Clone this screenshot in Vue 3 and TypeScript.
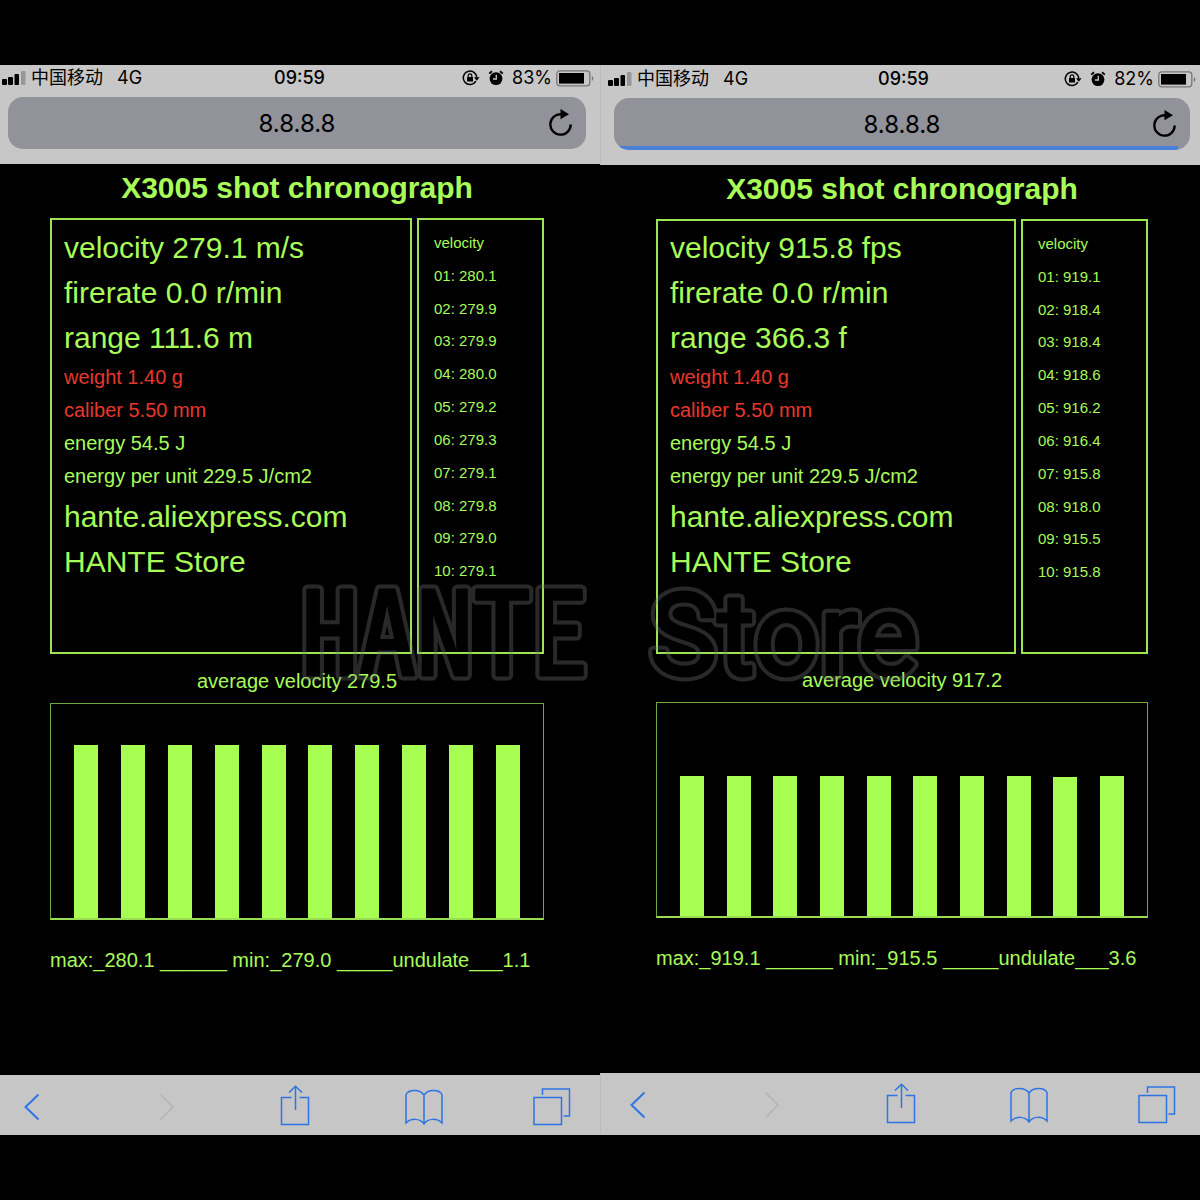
<script setup lang="ts">
interface Phone {
  id: string
  battery: number
  speed: string
  range: string
  average: string
  shots: string[]
  scale: number
  summary: string
  progress: number
}

const phones: Phone[] = [
  {
    id: 'metric',
    battery: 83,
    speed: '279.1 m/s',
    range: '111.6 m',
    average: '279.5',
    shots: ['280.1', '279.9', '279.9', '280.0', '279.2', '279.3', '279.1', '279.8', '279.0', '279.1'],
    scale: 346,
    summary: 'max:_280.1 ______ min:_279.0 _____undulate___1.1',
    progress: 0,
  },
  {
    id: 'imperial',
    battery: 82,
    speed: '915.8 fps',
    range: '366.3 f',
    average: '917.2',
    shots: ['919.1', '918.4', '918.4', '918.6', '916.2', '916.4', '915.8', '918.0', '915.5', '915.8'],
    scale: 1398,
    summary: 'max:_919.1 ______ min:_915.5 _____undulate___3.6',
    progress: 98,
  },
]

const shotNumber = (index: number): string => String(index + 1).padStart(2, '0')
</script>

<template>
  <main class="stage">
    <section v-for="phone in phones" :key="phone.id" class="phone" :class="phone.id">
      <header class="topbar">
        <div class="status">
          <div class="carrier">
            <svg class="signal" width="24" height="14" viewBox="0 0 24 14">
              <rect x="0" y="8" width="5" height="6" rx="1" />
              <rect x="6" y="6" width="5" height="8" rx="1" />
              <rect x="12.500" y="3" width="4.500" height="11" rx="1" />
              <rect x="19" y="0" width="4.500" height="14" rx="1" fill="#979797" />
            </svg>
            <span>中国移动</span>
            <span class="network">4G</span>
          </div>
          <time class="clock">09:59</time>
          <div class="indicators">
            <svg class="lock" width="18" height="16" viewBox="0 0 18 16">
              <path d="M13.800 11.200A6.700 6.700 0 1 1 14.700 7.500" fill="none" stroke="#000" stroke-width="1.500" />
              <path d="M12 7.200h5.600l-2.800 3.500z" />
              <rect x="5" y="7" width="6" height="4.600" rx=".5" />
              <path d="M6.200 7.200V5.600a1.800 1.800 0 0 1 3.600 0v1.600" fill="none" stroke="#000" stroke-width="1.200" />
            </svg>
            <svg class="alarm" width="16" height="16" viewBox="0 0 16 16">
              <circle cx="8" cy="8.600" r="6.400" />
              <path d="M1.200 3.600 4 1.200M12 1.200l2.800 2.400" stroke="#000" stroke-width="1.800" />
              <path d="M8.300 4.800v4.200H5" fill="none" stroke="#c7c7c7" stroke-width="1.300" />
            </svg>
            <span class="percent">{{ phone.battery }}%</span>
            <svg class="battery" width="38" height="17" viewBox="0 0 38 17">
              <rect x=".8" y=".8" width="33" height="15" rx="3" fill="none" stroke="#777" stroke-width="1.300" />
              <rect x="3" y="3" width="25" height="10.600" />
              <path d="M35.800 6c2 .8 2 4.200 0 5z" fill="#777" />
            </svg>
          </div>
        </div>
        <form class="address" @submit.prevent>
          <input class="url" type="text" value="8.8.8.8" aria-label="Address" />
          <button class="reload" type="button" aria-label="Reload">
            <svg width="24" height="28" viewBox="0 0 24 28">
              <path d="M21.700 15.500A10.200 10.200 0 1 1 12.500 5.300" fill="none" stroke="#000" stroke-width="2.400" />
              <path d="M11.500 0v10.200L20 5.200z" />
            </svg>
          </button>
          <div v-if="phone.progress" class="progress" :style="{ width: phone.progress + '%' }"></div>
        </form>
      </header>

      <div class="page">
        <h1>X3005 shot chronograph</h1>
        <div class="panels">
          <div class="panel readings">
            <p>velocity {{ phone.speed }}</p>
            <p>firerate 0.0 r/min</p>
            <p>range {{ phone.range }}</p>
            <div class="details">
              <p class="alert">weight 1.40 g</p>
              <p class="alert">caliber 5.50 mm</p>
              <p>energy 54.5 J</p>
              <p>energy per unit 229.5 J/cm2</p>
            </div>
            <p>hante.aliexpress.com</p>
            <p>HANTE Store</p>
          </div>
          <div class="panel log">
            <ul>
              <li>velocity</li>
              <li v-for="(shot, i) in phone.shots" :key="i">{{ shotNumber(i) }}: {{ shot }}</li>
            </ul>
          </div>
        </div>
        <p class="average">average velocity {{ phone.average }}</p>
        <div class="chart">
          <div
            v-for="(shot, i) in phone.shots"
            :key="i"
            class="bar"
            :style="{ height: (Number(shot) / phone.scale) * 100 + '%' }"
          ></div>
        </div>
        <p class="summary">{{ phone.summary }}</p>
      </div>

      <nav class="toolbar">
        <button type="button" class="back" aria-label="Back">
          <svg width="40" height="40" viewBox="0 0 40 40"><path d="M26.500 7.500 13.500 20l13 12.500" stroke-width="2" /></svg>
        </button>
        <button type="button" class="forward" aria-label="Forward" disabled>
          <svg width="40" height="40" viewBox="0 0 40 40"><path d="M13.500 7.500 26 20 13.500 32.500" stroke-width="1.500" /></svg>
        </button>
        <button type="button" aria-label="Share">
          <svg width="40" height="40" viewBox="0 0 40 40">
            <path d="M16.500 10.500H6.500v27h27v-27h-9M20.500 23V0M14 5.500 20.500-.8l6.500 6.300" />
          </svg>
        </button>
        <button type="button" aria-label="Bookmarks">
          <svg width="40" height="40" viewBox="0 0 40 40">
            <path d="M20 8C16 2 5 2 2 7.500V36c5-5 14-5 18 1 4-6 13-6 18-1V7.500C35 2 24 2 20 8zV37" />
          </svg>
        </button>
        <button type="button" aria-label="Tabs">
          <svg width="40" height="40" viewBox="0 0 40 40"><path d="M2 10.500h27.500v27H2zM10.500 8V2h27v27h-6" /></svg>
        </button>
      </nav>
    </section>

    <svg class="watermark" width="660" height="130" viewBox="0 0 660 130" aria-hidden="true">
      <defs>
        <g id="brand" class="word">
          <text class="caps" x="1" y="102">HANTE</text>
          <text x="349" y="102">Store</text>
        </g>
      </defs>
      <mask id="outline" maskUnits="userSpaceOnUse" x="0" y="0" width="660" height="130">
        <use href="#brand" fill="#fff" stroke="#fff" stroke-width="11" />
        <use href="#brand" fill="#000" stroke="#000" stroke-width="3" />
      </mask>
      <rect width="660" height="130" fill="#777" fill-opacity=".34" mask="url(#outline)" />
    </svg>
  </main>
</template>

<style>
body {
  margin: 0;
  background: #000;
}
</style>

<style scoped>
* {
  box-sizing: border-box;
}
p,
h1,
ul {
  margin: 0;
  padding: 0;
}
.stage {
  position: relative;
  display: flex;
  padding: 65px 0;
  background: #000;
  font-family: "Liberation Sans", Arial, "Noto Sans CJK SC", sans-serif;
}
.phone {
  flex: 1;
  display: flex;
  flex-direction: column;
  min-width: 0;
}
.topbar {
  height: 99px;
  padding: 0 14px 0 8px;
  background: #c7c7c7;
}
.status {
  display: grid;
  grid-template-columns: 1fr auto 1fr;
  align-items: center;
  height: 26px;
  margin: 0 -8px 6px -6px;
  font-family: Inter, "Noto Sans CJK SC", sans-serif;
  font-size: 18px;
  line-height: 24px;
  white-space: nowrap;
}
.carrier,
.indicators {
  display: flex;
  align-items: center;
}
.signal {
  margin-right: 5px;
}
.network {
  margin-left: 14px;
}
.clock {
  padding-left: 3px;
  font-weight: 500;
}
.indicators {
  justify-content: flex-end;
}
.alarm {
  margin: 0 8px;
}
.battery {
  margin-left: 4px;
}
.address {
  position: relative;
  height: 52px;
  border-radius: 15px;
  background: #91929a;
  overflow: hidden;
}
.url {
  display: block;
  width: 100%;
  height: 52px;
  padding: 0;
  border: 0;
  background: transparent;
  font: 24px Inter, sans-serif;
  color: #000;
  text-align: center;
}
.reload {
  position: absolute;
  top: 12px;
  right: 13px;
  padding: 0;
  border: 0;
  background: none;
}
.reload svg {
  display: block;
}
.progress {
  position: absolute;
  left: 0;
  bottom: 0;
  height: 4px;
  background: #4a80d8;
}
.page {
  flex: 1;
  padding: 4px 56px 100px 50px;
  color: #a8fb58;
}
h1 {
  font-size: 30px;
  line-height: 40px;
  text-align: center;
}
.panels {
  display: flex;
  gap: 5px;
  margin-top: 10px;
}
.panel {
  border: 2px solid #9be652;
}
.readings {
  flex: 1;
  height: 436px;
  padding: 5px 12px;
  font-size: 30px;
  line-height: 45px;
  white-space: nowrap;
}
.details {
  padding: 1px 0;
  font-size: 20px;
  line-height: 33px;
}
.alert {
  color: #e8372c;
}
.log {
  width: 127px;
  padding: 7px 15px;
}
.log ul {
  display: flex;
  flex-direction: column;
  height: 361px;
  font-size: 15px;
  line-height: 32px;
  list-style: none;
}
.log li {
  flex: 1;
}
.average {
  margin: 12px 0 7px;
  font-size: 20px;
  line-height: 30px;
  text-align: center;
}
.chart {
  display: flex;
  justify-content: space-between;
  align-items: flex-end;
  height: 217px;
  padding: 0 23px;
  border: 1px solid #6fa83f;
  border-bottom: 2px solid #97dc52;
}
.bar {
  width: 24px;
  background: #a7ff52;
}
.summary {
  margin-top: 25px;
  font-size: 20px;
  line-height: 30px;
  white-space: nowrap;
}
.toolbar {
  display: flex;
  justify-content: space-between;
  align-items: center;
  height: 60px;
  padding: 4px 28px 0 12px;
  background: #c6c6c6;
}
.toolbar button {
  width: 40px;
  height: 40px;
  padding: 0;
  border: 0;
  background: none;
  color: #2f74e4;
}
.toolbar svg {
  display: block;
  overflow: visible;
  fill: none;
  stroke: currentColor;
  stroke-width: 1.5px;
}
.toolbar .back {
  margin-right: 6px;
}
.toolbar .forward {
  color: #b3b3b3;
}
.imperial .topbar {
  height: 100px;
  padding: 1px 10px 0 13px;
}
.imperial .topbar,
.imperial .toolbar {
  border-left: 1px solid #bcbcbc;
}
.imperial .status {
  margin-right: -6px;
}
.imperial .page {
  padding: 4px 52px 99px 56px;
}
.imperial .readings {
  height: 435px;
  padding-top: 4px;
}
.imperial .average {
  margin-top: 11px;
}
.imperial .chart {
  height: 216px;
}
.imperial .toolbar {
  height: 62px;
  padding: 2px 23px 0 17px;
}
.watermark {
  position: absolute;
  top: 573px;
  left: 25%;
  pointer-events: none;
}
.word {
  font-family: Roboto, sans-serif;
  font-size: 115px;
  stroke-linejoin: round;
}
.caps {
  font-family: "Noto Sans Mono CJK SC", "DejaVu Sans Mono", monospace;
}
</style>
